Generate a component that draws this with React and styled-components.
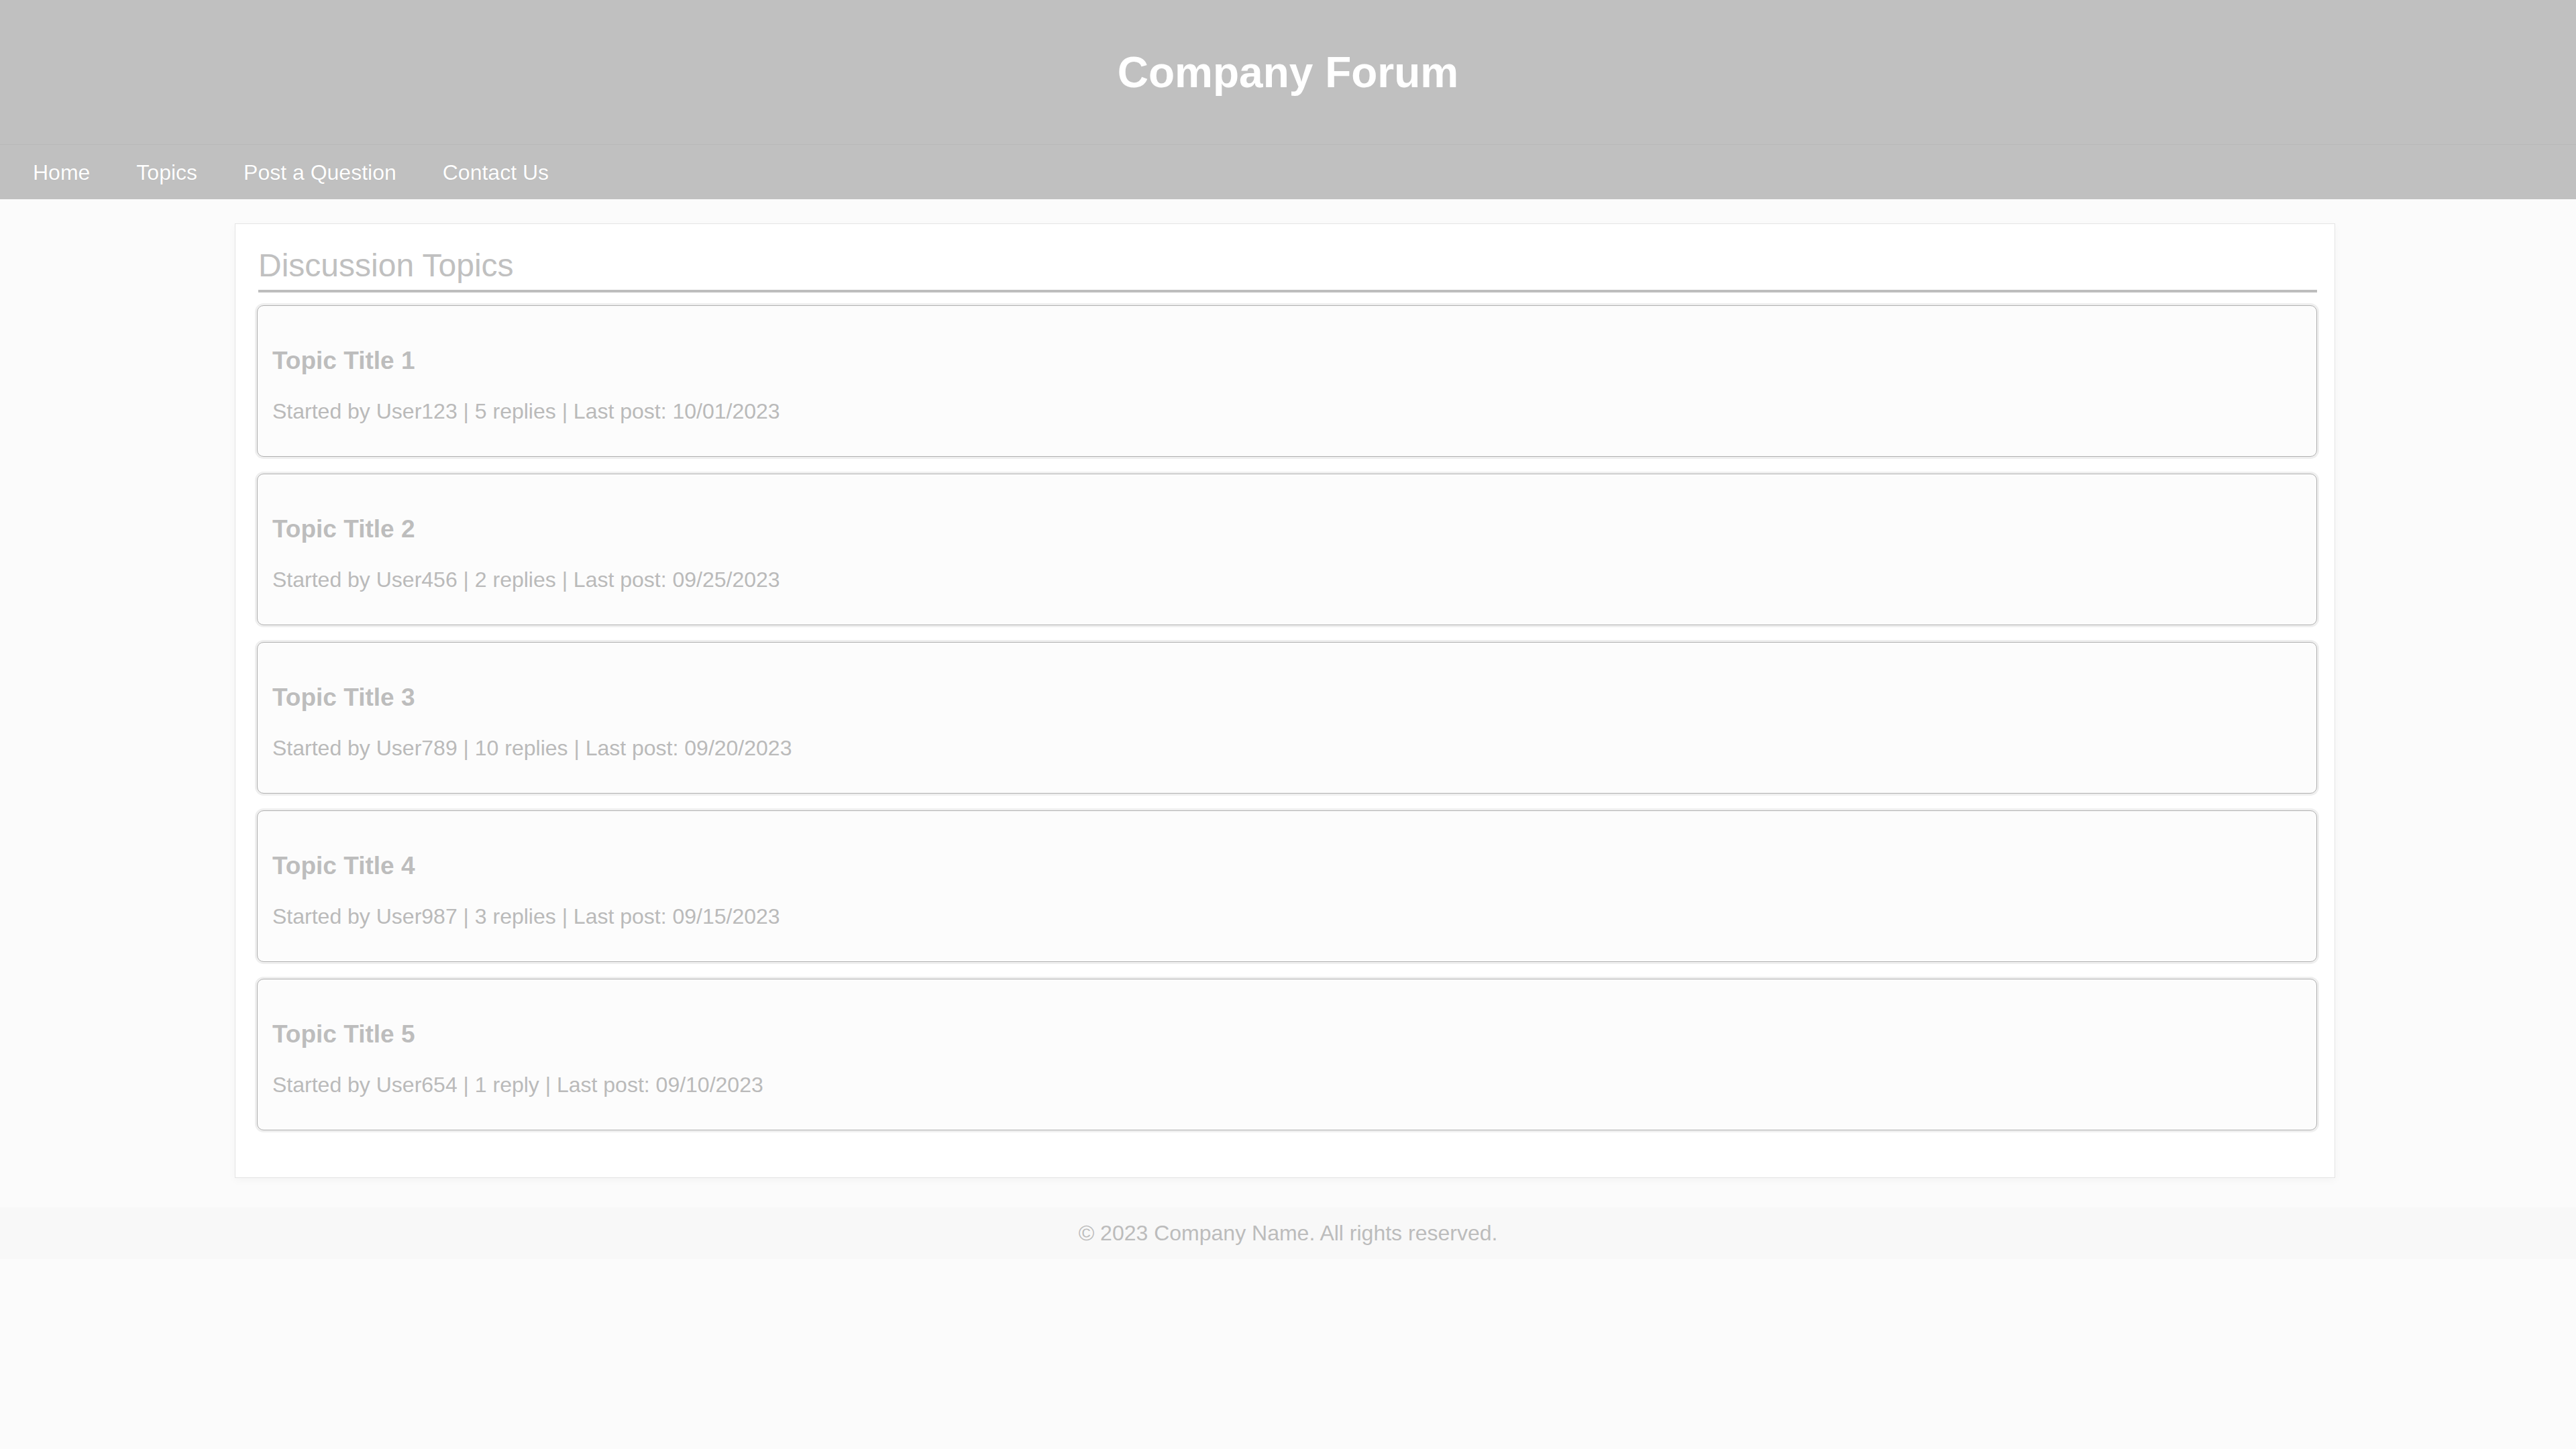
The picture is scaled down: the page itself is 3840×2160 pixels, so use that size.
import React from 'react';
import styled, { createGlobalStyle } from 'styled-components';

const GlobalStyle = createGlobalStyle`
  html, body {
    margin: 0;
    padding: 0;
    background: #fbfbfb;
    font-family: "Liberation Sans", Arial, sans-serif;
  }
`;

const Header = styled.header`
  height: 215px;
  background: #c0c0c0;
  border-bottom: 1px solid #b9b9b9;
  display: flex;
  align-items: center;
  justify-content: center;
`;

const Title = styled.h1`
  margin: 0;
  color: #ffffff;
  font-size: 64px;
  font-weight: 700;
`;

const Nav = styled.nav`
  height: 81px;
  padding: 2px 0 0 49px;
  box-sizing: border-box;
  background: #c0c0c0;
  display: flex;
  align-items: center;
  gap: 69px;
`;

const NavLink = styled.a`
  color: #ffffff;
  font-size: 32px;
  text-decoration: none;
  text-shadow: 0 0 1px rgba(0, 0, 0, 0.15);
`;

const Container = styled.main`
  width: 3131px;
  box-sizing: border-box;
  margin: 36px 0 0 350px;
  padding: 34px 26px 70px 32px;
  background: #ffffff;
  border: 1px solid #e4e4e4;
  box-shadow: 0 4px 12px rgba(0, 0, 0, 0.03);
`;

const SectionTitle = styled.h2`
  margin: 0 0 19px 2px;
  padding-bottom: 9px;
  border-bottom: 4px solid #bdbdbd;
  color: #c0c0c0;
  font-size: 48px;
  font-weight: 400;
`;

const TopicList = styled.div`
  display: flex;
  flex-direction: column;
  gap: 25px;
`;

const Card = styled.div`
  height: 226px;
  box-sizing: border-box;
  padding: 0 22px;
  background: #fcfcfc;
  border: 1px solid #b0b0b0;
  border-radius: 10px;
  box-shadow: 0 0 0 3px #efefef;
`;

const TopicTitle = styled.h3`
  margin: 61px 0 36px;
  color: #bdbdbd;
  font-size: 37px;
  font-weight: 700;
`;

const Meta = styled.p`
  margin: 0;
  color: #bababa;
  font-size: 32px;
`;

const Footer = styled.footer`
  margin-top: 44px;
  height: 77px;
  background: #f8f8f8;
  display: flex;
  align-items: center;
  justify-content: center;
  color: #bcbcbc;
  font-size: 32px;
`;

const topics = [
  { id: 1, user: 'User123', replies: '5 replies', last: '10/01/2023' },
  { id: 2, user: 'User456', replies: '2 replies', last: '09/25/2023' },
  { id: 3, user: 'User789', replies: '10 replies', last: '09/20/2023' },
  { id: 4, user: 'User987', replies: '3 replies', last: '09/15/2023' },
  { id: 5, user: 'User654', replies: '1 reply', last: '09/10/2023' },
];

const App = () => {
  return (
    <>
      <GlobalStyle />
      <Header>
        <Title>Company Forum</Title>
      </Header>
      <Nav>
        <NavLink href="#">Home</NavLink>
        <NavLink href="#">Topics</NavLink>
        <NavLink href="#">Post a Question</NavLink>
        <NavLink href="#">Contact Us</NavLink>
      </Nav>
      <Container>
        <SectionTitle>Discussion Topics</SectionTitle>
        <TopicList>
          {topics.map(t => (
            <Card key={t.id}>
              <TopicTitle>Topic Title {t.id}</TopicTitle>
              <Meta>Started by {t.user} | {t.replies} | Last post: {t.last}</Meta>
            </Card>
          ))}
        </TopicList>
      </Container>
      <Footer>© 2023 Company Name. All rights reserved.</Footer>
    </>
  );
};

export default App;
